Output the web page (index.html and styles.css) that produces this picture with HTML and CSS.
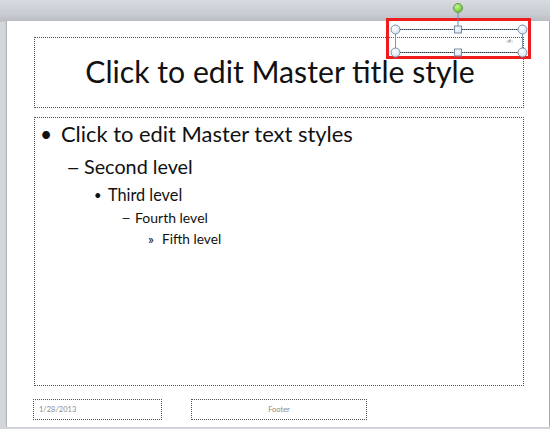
FILE: index.html
```html
<!DOCTYPE html>
<html>
<head>
<meta charset="utf-8">
<link rel="stylesheet" href="styles.css">
</head>
<body>
<div class="stage">
  <div class="slide">
    <div class="title-box"><span class="title">Click to edit Master title style</span></div>
    <div class="body-box">
      <div class="lvl l1"><span class="bul">•</span><span>Click to edit Master text styles</span></div>
      <div class="lvl l2"><span class="bul"><span class="dash">–</span></span><span>Second level</span></div>
      <div class="lvl l3"><span class="bul">•</span><span>Third level</span></div>
      <div class="lvl l4"><span class="bul"><span class="dash">–</span></span><span>Fourth level</span></div>
      <div class="lvl l5"><span class="bul">»</span><span>Fifth level</span></div>
    </div>
    <div class="footer-row">
      <div class="date-box">1/28/2013</div>
      <div class="foot-box">Footer</div>
    </div>
  </div>
  <div class="highlight"></div>
  <div class="selection">
    <span class="num">‹#›</span>
    <svg class="handles" width="150" height="62" viewBox="0 0 150 62">
      <defs>
        <radialGradient id="hg" cx="0.4" cy="0.35" r="0.7">
          <stop offset="0" stop-color="#ffffff"/>
          <stop offset="1" stop-color="#cfe2f3"/>
        </radialGradient>
        <radialGradient id="gg" cx="0.4" cy="0.35" r="0.7">
          <stop offset="0" stop-color="#c8f59a"/>
          <stop offset="1" stop-color="#5cbf2a"/>
        </radialGradient>
      </defs>
      <line x1="68" y1="9" x2="68" y2="29" stroke="#6f8aa6" stroke-width="1"/>
      <rect x="5.5" y="29.5" width="127" height="23" fill="none" stroke="#7d96b0" stroke-width="1"/>
      <line x1="6" y1="29.5" x2="132" y2="29.5" stroke="#2f3b4a" stroke-width="1" stroke-dasharray="1 1"/>
      <line x1="6" y1="52.5" x2="132" y2="52.5" stroke="#2f3b4a" stroke-width="1" stroke-dasharray="1 1"/>
      <circle cx="68" cy="8" r="4.5" fill="url(#gg)" stroke="#6b9a4a" stroke-width="1"/>
      <circle cx="5.5" cy="29.5" r="4.5" fill="url(#hg)" stroke="#7a8fa5" stroke-width="1"/>
      <circle cx="132.5" cy="29.5" r="4.5" fill="url(#hg)" stroke="#7a8fa5" stroke-width="1"/>
      <circle cx="5.5" cy="52.5" r="4.5" fill="url(#hg)" stroke="#7a8fa5" stroke-width="1"/>
      <circle cx="132.5" cy="52.5" r="4.5" fill="url(#hg)" stroke="#7a8fa5" stroke-width="1"/>
      <rect x="64.5" y="26" width="7" height="7" fill="url(#hg)" stroke="#7a8fa5" stroke-width="1"/>
      <rect x="64.5" y="49" width="7" height="7" fill="url(#hg)" stroke="#7a8fa5" stroke-width="1"/>
    </svg>
  </div>
</div>
</body>
</html>
```
FILE: styles.css
```css
html, body {
  margin: 0;
  padding: 0;
}
body {
  width: 550px;
  height: 429px;
  overflow: hidden;
  font-family: "Lato", "Open Sans", sans-serif;
}
.stage {
  position: relative;
  width: 550px;
  height: 429px;
  background: linear-gradient(to bottom, #d8dbe0 0px, #c9ccd2 14px, #b9bdc3 21px, #d3d6db 22px, #d3d6db 100%);
  padding: 21px 1px 2px 7px;
  box-sizing: border-box;
}
.slide {
  width: 542px;
  height: 406px;
  background: #ffffff;
  box-shadow: -1px 0 1px #b4b8be, 1px 0 0 #a9adb3;
  padding: 16px 0 0 27px;
  box-sizing: border-box;
  display: flex;
  flex-direction: column;
}
.title-box {
  width: 490px;
  height: 71px;
  box-sizing: border-box;
  border: 1px dotted #555;
  display: flex;
  align-items: center;
  justify-content: center;
  padding-left: 2px;
  padding-bottom: 3px;
}
.title {
  font-size: 30.2px;
  color: #111;
}
.body-box {
  margin-top: 9px;
  width: 490px;
  height: 269px;
  box-sizing: border-box;
  border: 1px dotted #555;
  padding-top: 0;
  color: #111;
}
.lvl {
  display: flex;
  align-items: center;
}
.lvl .bul {
  flex: none;
}
.dash {
  display: inline-block;
  transform: scaleX(1.25);
  transform-origin: left center;
}
.l1 {
  font-size: 21.9px;
  padding-left: 5px;
  height: 32px;
  line-height: 32px;
}
.l1 .bul { width: 21px; font-size: 21px; }
.l2 {
  font-size: 19.8px;
  padding-left: 31px;
  height: 32px;
  line-height: 32px;
}
.l2 .bul { width: 18px; }
.l3 {
  font-size: 16.3px;
  padding-left: 59px;
  height: 26px;
  line-height: 26px;
}
.l3 .bul { width: 14px; font-size: 13px; }
.l4 {
  font-size: 14px;
  padding-left: 86px;
  height: 20px;
  line-height: 20px;
}
.l4 .bul { width: 14px; }
.l5 {
  font-size: 13.7px;
  padding-left: 113px;
  height: 22px;
  line-height: 22px;
}
.l5 .bul { width: 14px; }
.footer-row {
  display: flex;
  margin-top: 13px;
  margin-left: -1px;
}
.date-box, .foot-box {
  height: 21px;
  box-sizing: border-box;
  border: 1px dotted #555;
  font-size: 7.5px;
  color: #8a8a8a;
  display: flex;
  align-items: center;
}
.date-box {
  width: 129px;
  padding-left: 5px;
}
.foot-box {
  margin-left: 29px;
  width: 176px;
  justify-content: center;
}
.highlight {
  position: absolute;
  left: 386px;
  top: 18px;
  width: 145px;
  height: 41px;
  box-sizing: border-box;
  border: 3px solid #ee1c1c;
}
.selection {
  position: absolute;
  left: 390px;
  top: 0;
  width: 150px;
  height: 62px;
}
.handles {
  display: block;
}
.num {
  position: absolute;
  left: 116px;
  top: 37px;
  font-size: 6px;
  color: #999;
}
```
